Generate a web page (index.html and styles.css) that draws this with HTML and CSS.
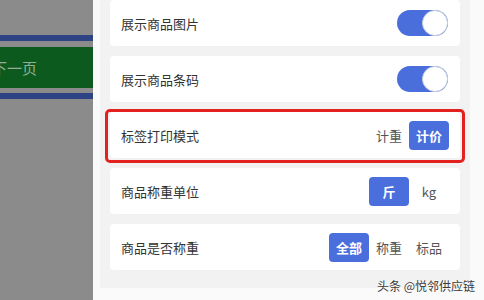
FILE: index.html
```html
<!DOCTYPE html>
<html lang="zh">
<head>
<meta charset="utf-8">
<link rel="stylesheet" href="styles.css">
</head>
<body>
<div class="page">
  <div class="left">
    <div class="navbtn">
      <div class="stripe"></div>
      <div class="gap"></div>
      <div class="green"><span class="next">下一页</span></div>
      <div class="gap small"></div>
      <div class="stripe"></div>
    </div>
  </div>
  <div class="right">
    <div class="panel">
      <div class="card">
        <span class="label">展示商品图片</span>
        <span class="toggle"><span class="knob"></span></span>
      </div>
      <div class="card">
        <span class="label">展示商品条码</span>
        <span class="toggle"><span class="knob"></span></span>
      </div>
      <div class="card marked">
        <span class="label">标签打印模式</span>
        <div class="seg">
          <span class="opt">计重</span>
          <span class="opt on">计价</span>
        </div>
      </div>
      <div class="card">
        <span class="label">商品称重单位</span>
        <div class="seg">
          <span class="opt on">斤</span>
          <span class="opt">kg</span>
        </div>
      </div>
      <div class="card">
        <span class="label">商品是否称重</span>
        <div class="seg">
          <span class="opt on">全部</span>
          <span class="opt">称重</span>
          <span class="opt">标品</span>
        </div>
      </div>
    </div>
  </div>
</div>
<div class="watermark">头条 @悦邻供应链</div>
</body>
</html>
```

FILE: styles.css
```css
html, body {
  margin: 0;
  padding: 0;
  width: 484px;
  height: 300px;
  overflow: hidden;
  font-family: "Noto Sans CJK SC", "Noto Sans", sans-serif;
}
.page {
  display: flex;
  width: 484px;
  height: 300px;
}
.left {
  width: 93px;
  flex: none;
  background: #8b8b8b;
  padding-top: 35px;
  box-sizing: border-box;
}
.navbtn {
  display: flex;
  flex-direction: column;
}
.stripe {
  height: 6px;
  background: #2e4384;
}
.gap {
  height: 6px;
}
.gap.small {
  height: 5px;
}
.green {
  height: 41px;
  background: #0d5a1e;
  display: flex;
  align-items: center;
  overflow: hidden;
}
.next {
  margin-left: -8px;
  font-size: 15px;
  color: #93ad96;
  white-space: nowrap;
}
.right {
  flex: 1;
  background: #fafafa;
  padding: 0 14px 0 7px;
}
.panel {
  margin-top: -10px;
  background: #f2f2f2;
  padding: 10px 10px 18px 10px;
  display: flex;
  flex-direction: column;
  gap: 10px;
}
.card {
  position: relative;
  height: 46px;
  background: #ffffff;
  border-radius: 4px;
  display: flex;
  align-items: center;
  justify-content: space-between;
  padding: 0 11px 0 11px;
}
.card.marked::after {
  content: "";
  position: absolute;
  top: -3px;
  bottom: -5px;
  left: -5px;
  right: -5px;
  border: 3px solid #e3221f;
  border-radius: 5px;
}
.label {
  font-size: 13px;
  color: #333333;
}
.toggle {
  width: 51px;
  height: 26px;
  border-radius: 13px;
  background: #4a6fdc;
  display: flex;
  justify-content: flex-end;
  margin-right: 1px;
}
.knob {
  width: 26px;
  height: 26px;
  box-sizing: border-box;
  border-radius: 50%;
  background: #ffffff;
  border: 1px solid #c9cfe0;
}
.seg {
  display: flex;
}
.opt {
  width: 40px;
  height: 29px;
  display: flex;
  align-items: center;
  justify-content: center;
  font-size: 13px;
  color: #555555;
  border-radius: 4px;
}
.opt.on {
  background: #4a6fdc;
  color: #ffffff;
  font-weight: bold;
}
.watermark {
  position: absolute;
  right: 9px;
  bottom: 6px;
  font-size: 12px;
  color: #3a3a3a;
  text-shadow: 0 0 2px #ffffff, 0 0 2px #ffffff;
}
```
